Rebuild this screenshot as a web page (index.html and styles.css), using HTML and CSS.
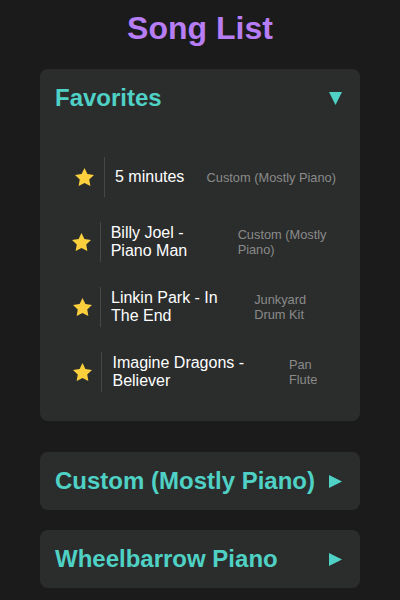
FILE: index.html
```html
<!DOCTYPE html>
<html lang="en">
<head>
<meta charset="utf-8">
<title>Song List</title>
<link rel="stylesheet" href="styles.css">
</head>
<body>
<main class="app">
  <h1 class="title">Song List</h1>
  <div class="groups">
    <section class="group group-open">
      <div class="group-header">
        <h2 class="group-name">Favorites</h2>
        <svg class="caret" width="13" height="13" viewBox="0 0 13 13"><polygon points="0,0 13,0 6.5,13" fill="currentColor"/></svg>
      </div>
      <ul class="songs">
        <li class="song">
          <span class="star"><svg width="19" height="18.4" viewBox="2 2 20 19.4"><polygon points="12,2 15.09,8.26 22,9.27 17,14.14 18.18,21.02 12,17.77 5.82,21.02 7,14.14 2,9.27 8.91,8.26" fill="currentColor"/></svg></span>
          <span class="song-title">5 minutes</span>
          <span class="song-style">Custom (Mostly Piano)</span>
        </li>
        <li class="song">
          <span class="star"><svg width="19" height="18.4" viewBox="2 2 20 19.4"><polygon points="12,2 15.09,8.26 22,9.27 17,14.14 18.18,21.02 12,17.77 5.82,21.02 7,14.14 2,9.27 8.91,8.26" fill="currentColor"/></svg></span>
          <span class="song-title">Billy Joel - Piano Man</span>
          <span class="song-style">Custom (Mostly Piano)</span>
        </li>
        <li class="song">
          <span class="star"><svg width="19" height="18.4" viewBox="2 2 20 19.4"><polygon points="12,2 15.09,8.26 22,9.27 17,14.14 18.18,21.02 12,17.77 5.82,21.02 7,14.14 2,9.27 8.91,8.26" fill="currentColor"/></svg></span>
          <span class="song-title">Linkin Park - In The End</span>
          <span class="song-style">Junkyard Drum Kit</span>
        </li>
        <li class="song">
          <span class="star"><svg width="19" height="18.4" viewBox="2 2 20 19.4"><polygon points="12,2 15.09,8.26 22,9.27 17,14.14 18.18,21.02 12,17.77 5.82,21.02 7,14.14 2,9.27 8.91,8.26" fill="currentColor"/></svg></span>
          <span class="song-title">Imagine Dragons - Believer</span>
          <span class="song-style">Pan Flute</span>
        </li>
      </ul>
    </section>
    <section class="group">
      <div class="group-header">
        <h2 class="group-name">Custom (Mostly Piano)</h2>
        <svg class="caret" width="13" height="13" viewBox="0 0 13 13"><polygon points="0,0 13,6.5 0,13" fill="currentColor"/></svg>
      </div>
    </section>
    <section class="group">
      <div class="group-header">
        <h2 class="group-name">Wheelbarrow Piano</h2>
        <svg class="caret" width="13" height="13" viewBox="0 0 13 13"><polygon points="0,0 13,6.5 0,13" fill="currentColor"/></svg>
      </div>
    </section>
  </div>
</main>
</body>
</html>
```
FILE: styles.css
```css
html, body {
  margin: 0;
  padding: 0;
  background: #1b1b1b;
}

body {
  font-family: "Liberation Sans", Arial, sans-serif;
  color: #ffffff;
}

.app {
  padding: 10px 40px 20px;
}

.title {
  margin: 0 0 22px;
  font-size: 32px;
  font-weight: bold;
  text-align: center;
  color: #b67df4;
  line-height: normal;
}

.groups {
  display: flex;
  flex-direction: column;
  gap: 20px;
}

.group {
  background: #2b2d2d;
  border-radius: 8px;
  padding: 15px 16px 15px 15px;
}

.group-open {
  padding-bottom: 21px;
  margin-bottom: 11px;
}

.group-header {
  display: flex;
  align-items: center;
  justify-content: space-between;
}

.group-name {
  margin: 0;
  font-size: 24px;
  font-weight: bold;
  color: #4fd1c5;
  line-height: normal;
}

.caret {
  color: #4fd1c5;
  flex-shrink: 0;
  margin-right: 2px;
}

.songs {
  list-style: none;
  margin: 37px 0 0;
  padding: 0 0 0 1px;
  display: flex;
  flex-direction: column;
  gap: 9px;
}

.song {
  display: flex;
  align-items: center;
  gap: 10px;
  padding: 8px;
}

.star {
  display: flex;
  justify-content: center;
  align-items: center;
  width: 18px;
  height: 18px;
  min-width: 0;
  padding: 11px;
  border-right: 1px solid #454848;
  color: #fcd03d;
}

.star svg {
  flex-shrink: 0;
  display: block;
}

.song-title {
  flex-grow: 1;
  font-size: 16px;
  color: #ffffff;
}

.song-style {
  font-size: 12.8px;
  color: #8a8a8a;
}
```
